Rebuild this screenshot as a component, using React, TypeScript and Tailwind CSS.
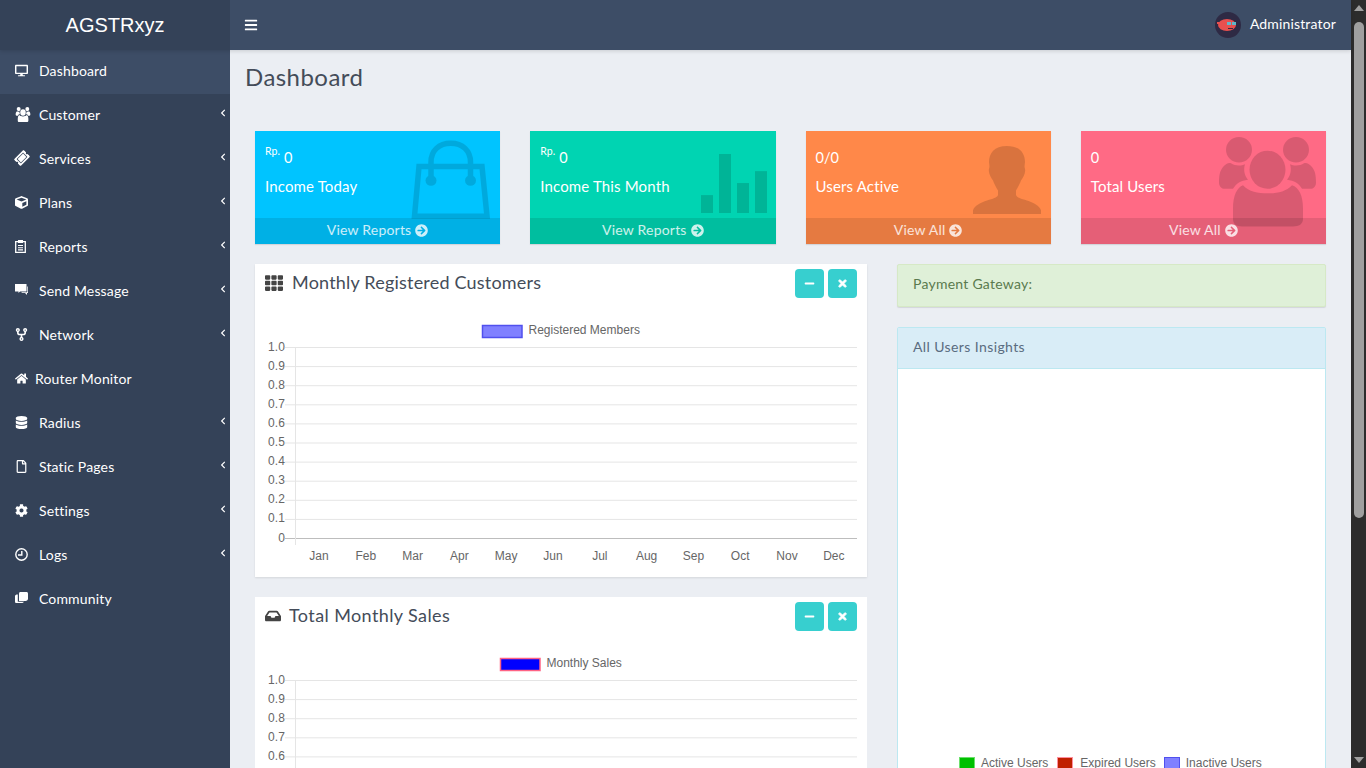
import React from 'react';
import {
  FaDesktop,
  FaTicketAlt,
  FaCube,
  FaHome,
  FaDatabase,
  FaRegFile,
  FaCog,
  FaChevronLeft,
  FaBars,
  FaArrowCircleRight,
  FaMinus,
  FaTimes,
  FaTh,
  FaInbox,
} from 'react-icons/fa';
import { FaCodeFork } from 'react-icons/fa6';

function PeoplePaths() {
  return (
    <>
      <ellipse cx="20" cy="14" rx="13" ry="14" />
      <ellipse cx="77" cy="14" rx="13" ry="14" />
      <path d="M4 33 C7 29 10 28 12 29 C16 32 22 32 26 30 C24 37 26 43 29 47 C22 48 17 51 14 57 H6 C2 57 0 54 0 50 C0 42 1 37 4 33 Z" />
      <path d="M93 33 C90 29 87 28 85 29 C81 32 75 32 71 30 C73 37 71 43 68 47 C75 48 80 51 83 57 H91 C95 57 97 54 97 50 C97 42 96 37 93 33 Z" />
      <ellipse cx="48.5" cy="36" rx="18" ry="21" />
      <path d="M24 53 C30 60 39 62 48.5 62 C58 62 67 60 73 53 C80 55 84 65 84 78 V90 C84 96 80 98.5 74 98.5 H23 C17 98.5 14 96 14 90 V78 C14 65 18 55 24 53 Z" />
    </>
  );
}

function UsersGlyph() {
  return (
    <svg width="16" height="15" viewBox="0 0 97 99" fill="white">
      <PeoplePaths />
    </svg>
  );
}

function TicketGlyph() {
  return <FaTicketAlt className="-rotate-45 text-[14px]" />;
}

function ClipboardGlyph() {
  return (
    <svg width="11" height="13" viewBox="0 0 11 13" fill="none" stroke="white" strokeWidth="1.3">
      <path d="M3 1.7H0.7V12.3H10.3V1.7H8" />
      <rect x="3" y="0" width="5" height="3" fill="white" stroke="none" />
      <path d="M3 5.5H8M3 7.7H8M3 9.9H8" strokeWidth="1.1" />
    </svg>
  );
}

function ChatGlyph() {
  return (
    <svg width="13" height="12" viewBox="0 0 13 12" fill="white">
      <path d="M0 0H11.5V7.5H5L3.5 9V7.5H0Z" />
      <path d="M12.3 2.5H13V9H12V11L10 9H6.2L7 8.3H12.3Z" />
    </svg>
  );
}

function CommunityGlyph() {
  return (
    <svg width="13" height="12" viewBox="0 0 13 12" fill="white">
      <path d="M4 1.5C4 0.6 4.6 0 5.5 0H11.5C12.4 0 13 0.6 13 1.5V6.5C13 8 12 9 10.5 9H4Z" />
      <path d="M2.8 2.5V9.8H9C8.5 10.8 7.5 11 6.5 11H1.5C0.5 11 0 10.5 0 9.5V4C0 3.2 1 2.5 2.8 2.5Z" />
    </svg>
  );
}

function ClockGlyph() {
  return (
    <svg width="13" height="13" viewBox="0 0 13 13" fill="none" stroke="white">
      <circle cx="6.5" cy="6.5" r="5.7" strokeWidth="1.4" />
      <path d="M6.8 3V7H3" strokeWidth="1.4" />
    </svg>
  );
}

const menu = [
  { label: 'Dashboard', icon: FaDesktop, active: true },
  { label: 'Customer', icon: UsersGlyph, arrow: true },
  { label: 'Services', icon: TicketGlyph, arrow: true },
  { label: 'Plans', icon: FaCube, arrow: true },
  { label: 'Reports', icon: ClipboardGlyph, arrow: true },
  { label: 'Send Message', icon: ChatGlyph, arrow: true },
  { label: 'Network', icon: FaCodeFork, arrow: true },
  { label: 'Router Monitor', icon: FaHome, tight: true },
  { label: 'Radius', icon: FaDatabase, arrow: true },
  { label: 'Static Pages', icon: FaRegFile, arrow: true },
  { label: 'Settings', icon: FaCog, arrow: true },
  { label: 'Logs', icon: ClockGlyph, arrow: true },
  { label: 'Community', icon: CommunityGlyph },
];

const months = ['Jan', 'Feb', 'Mar', 'Apr', 'May', 'Jun', 'Jul', 'Aug', 'Sep', 'Oct', 'Nov', 'Dec'];
const ticks = ['1.0', '0.9', '0.8', '0.7', '0.6', '0.5', '0.4', '0.3', '0.2', '0.1', '0'];

function BagIcon() {
  return (
    <svg width="80" height="81" viewBox="0 0 80 84" preserveAspectRatio="none" fill="none" stroke="black" strokeWidth="5.5" className="opacity-[0.13]">
      <path d="M3.5 80 L8 28.5 H71 L76 80 Z" />
      <path d="M20 43 V24 C20 12 28 4.4 39.75 4.4 C51.5 4.4 59.5 12 59.5 24 V43" />
      <circle cx="20" cy="43" r="5.5" fill="black" stroke="none" />
      <circle cx="59.5" cy="43" r="5.5" fill="black" stroke="none" />
    </svg>
  );
}

function BarsIcon() {
  return (
    <svg width="66" height="59" viewBox="0 0 66 61" preserveAspectRatio="none" className="fill-black/15">
      <rect x="0" y="42.5" width="12" height="18.5" />
      <rect x="18" y="0" width="12" height="61" />
      <rect x="36" y="30" width="12" height="31" />
      <rect x="54" y="17.7" width="12" height="43.3" />
    </svg>
  );
}

function PersonIcon() {
  return (
    <svg width="68" height="68" viewBox="0 0 68 75" preserveAspectRatio="none" className="fill-black/15">
      <path d="M34 0 C47 0 52 8 52 18 C52 20 51 22 52 25 C53 30 50 35 48 38 C46 44 44 47 43 49 V54 C44 57 48 58 54 60 C60 62 67 66 68 71 V75 H0 V71 C1 66 8 62 14 60 C20 58 24 57 25 54 V49 C24 47 22 44 20 38 C18 35 15 30 16 25 C17 22 16 20 16 18 C16 8 21 0 34 0 Z" />
    </svg>
  );
}

function PeopleIcon() {
  return (
    <svg width="97" height="90" viewBox="0 0 97 99" preserveAspectRatio="none" className="fill-black/15">
      <PeoplePaths />
    </svg>
  );
}

function Avatar() {
  return (
    <svg width="26" height="26" viewBox="0 0 26 26">
      <circle cx="13" cy="13" r="13" fill="#2e2a44" />
      <ellipse cx="12" cy="13" rx="9" ry="6" fill="#e8504f" />
      <rect x="12" y="10" width="4" height="3" fill="#5fb7c9" />
      <rect x="17" y="10" width="4" height="3" fill="#5fb7c9" />
      <rect x="2" y="10" width="4" height="2" fill="#e8504f" />
      <rect x="13" y="16" width="5" height="1" fill="#3a2b3c" />
    </svg>
  );
}

function StatCard({
  value,
  rp,
  label,
  link,
  color,
  art,
}: {
  value: string;
  rp?: boolean;
  label: string;
  link: string;
  color: string;
  art: React.ReactNode;
}) {
  return (
    <div className={`relative h-[113px] overflow-hidden shadow-[0_1px_1px_rgba(0,0,0,0.1)] ${color}`}>
      <div className="h-[87px] px-[10px] pt-[15px] text-white">
        <div className="flex h-[24px] items-center text-[14.5px]">
          {rp && <sup className="mr-[4px] -mt-[4px] text-[10.5px]">Rp.</sup>}
          {value}
        </div>
        <div className="mt-[4px] text-[15px] leading-[24px] tracking-[0.15px]">{label}</div>
      </div>
      {art}
      <div className="relative flex h-[26px] items-center justify-center gap-[4px] bg-black/10 pb-[3px] text-[14px] tracking-[0.2px] text-white/80">
        {link}
        <FaArrowCircleRight className="mt-[1px] text-[13px]" />
      </div>
    </div>
  );
}

function PanelTitle({ icon, title, gap }: { icon: React.ReactNode; title: string; gap: string }) {
  return (
    <div className="flex h-[39px] items-center justify-between pl-[10px] pr-[10px]">
      <div className={`flex items-center pb-[2px] text-[18px] text-[#444c59] ${gap}`}>
        {icon}
        {title}
      </div>
      <div className="flex gap-[4px]">
        <button className="flex h-[29px] w-[29px] items-center justify-center rounded-[4px] bg-[#37cfcf] text-[11px] text-white">
          <FaMinus />
        </button>
        <button className="flex h-[29px] w-[29px] items-center justify-center rounded-[4px] bg-[#37cfcf] text-[11px] text-white">
          <FaTimes className="stroke-white stroke-[40]" />
        </button>
      </div>
    </div>
  );
}

function LineChart({
  legend,
  swatch,
  stroke,
  legendX,
  height,
  clipped,
}: {
  legend: string;
  swatch: string;
  stroke: string;
  legendX: number;
  height: number;
  clipped?: boolean;
}) {
  const rows = clipped ? ticks.slice(0, 5) : ticks;
  return (
    <svg width="612" height={height} className="block [font-family:'Liberation_Sans',Arial,sans-serif]">
      <rect x={legendX} y="22.5" width="39.5" height="12" fill={swatch} stroke={stroke} strokeWidth="1.5" />
      <text x={legendX + 46} y="31" fontSize="12" fill="#666">
        {legend}
      </text>
      {rows.map((t, i) => {
        const y = 44.5 + i * 19.1;
        const last = i === 10;
        return (
          <g key={t}>
            <line x1="30" x2="602" y1={y} y2={y} stroke={last ? '#bdbdbd' : '#e5e5e5'} />
            <text x="30" y={y + 3} fontSize="12" fill="#666" textAnchor="end" letterSpacing="0.1">
              {t}
            </text>
          </g>
        );
      })}
      <line x1="40.5" x2="40.5" y1="44" y2={clipped ? height : 242} stroke="#e5e5e5" />
      {!clipped &&
        months.map((m, i) => (
          <text key={m} x={64 + i * 46.8} y="257" fontSize="12" fill="#666" textAnchor="middle">
            {m}
          </text>
        ))}
    </svg>
  );
}

export default function App() {
  return (
    <div className="flex h-screen w-full overflow-hidden bg-[#ebeef3] [font-family:Lato,sans-serif]">
      <div className="flex h-full w-[1351px] flex-col">
        <header className="z-10 flex h-[50px] shrink-0 shadow-[0_1px_4px_rgba(0,0,0,0.15)]">
          <div className="flex w-[230px] items-center justify-center bg-[#344258] text-[20px] text-white [font-family:'Liberation_Sans',Arial,sans-serif]">
            AGSTRxyz
          </div>
          <div className="flex flex-1 items-center justify-between bg-[#3d4d66] pl-[14px] pr-[15px] text-white">
            <FaBars className="text-[14px]" />
            <div className="flex items-center gap-[9px] text-[14px] tracking-[0.15px]">
              <Avatar />
              <span className="pb-[3px]">Administrator</span>
            </div>
          </div>
        </header>
        <div className="flex min-h-0 flex-1">
          <aside className="w-[230px] shrink-0 bg-[#344258] text-white">
            {menu.map((m) => {
              const Icon = m.icon;
              return (
                <div
                  key={m.label}
                  className={`flex h-[44px] items-center pb-[4px] pl-[15px] pr-[3px] text-[14px] tracking-[0.15px] ${m.active ? 'bg-[#3d4d66]' : ''}`}
                >
                  <span className={`flex items-center text-[13px] ${m.tight ? 'w-[20px]' : 'w-[24px]'}`}>
                    <Icon />
                  </span>
                  <span className="flex-1">{m.label}</span>
                  {m.arrow && <FaChevronLeft className="-mt-[2px] text-[8px]" />}
                </div>
              );
            })}
          </aside>
          <main className="min-w-0 flex-1 overflow-hidden">
            <h1 className="pl-[15px] pt-[13px] text-[24px] leading-[28px] tracking-[0.45px] text-[#444c59]">Dashboard</h1>
            <div className="mt-[40px] grid grid-cols-4 gap-[30px] px-[25px]">
              <StatCard
                rp
                value="0"
                label="Income Today"
                link="View Reports"
                color="bg-[#00c4ff]"
                art={
                  <div className="absolute right-[9px] top-[8px]">
                    <BagIcon />
                  </div>
                }
              />
              <StatCard
                rp
                value="0"
                label="Income This Month"
                link="View Reports"
                color="bg-[#00d4b2]"
                art={
                  <div className="absolute right-[9px] top-[23px]">
                    <BarsIcon />
                  </div>
                }
              />
              <StatCard
                value="0/0"
                label="Users Active"
                link="View All"
                color="bg-[#ff8849]"
                art={
                  <div className="absolute right-[10px] top-[15px]">
                    <PersonIcon />
                  </div>
                }
              />
              <StatCard
                value="0"
                label="Total Users"
                link="View All"
                color="bg-[#ff6a85]"
                art={
                  <div className="absolute right-[10px] top-[6px]">
                    <PeopleIcon />
                  </div>
                }
              />
            </div>
            <div className="mt-[20px] grid grid-cols-[612px_429px] gap-[30px] px-[25px]">
              <div className="flex flex-col gap-[20px]">
                <section className="h-[313px] bg-white shadow-[0_1px_2px_rgba(0,0,0,0.1)]">
                  <PanelTitle icon={<FaTh className="text-[18px] text-[#444]" />} title="Monthly Registered Customers" gap="gap-[9px] tracking-[0.2px]" />
                  <LineChart legend="Registered Members" swatch="#8080ff" stroke="#5050ee" legendX={227.5} height={270} />
                </section>
                <section className="bg-white">
                  <PanelTitle icon={<FaInbox className="text-[16px] text-[#444]" />} title="Total Monthly Sales" gap="gap-[8px] tracking-[0.4px]" />
                  <LineChart legend="Monthly Sales" swatch="#0000ff" stroke="#ff6384" legendX={245.5} height={132} clipped />
                </section>
              </div>
              <div className="flex flex-col gap-[20px]">
                <div className="flex h-[43px] items-center rounded-[2px] border border-[#d6e9c6] bg-[#dff0d8] px-[15px] pb-[5px] text-[14px] tracking-[0.25px] text-[#5a7a4e] shadow-[0_1px_1px_rgba(0,0,0,0.1)]">
                  Payment Gateway:
                </div>
                <section className="flex h-[450px] flex-col rounded-t-[2px] border border-[#bce8f1] bg-white">
                  <div className="flex h-[41px] shrink-0 items-center border-b border-[#bce8f1] bg-[#d9edf7] px-[15px] pb-[3px] text-[14px] tracking-[0.4px] text-[#5a6c80]">
                    All Users Insights
                  </div>
                  <div className="flex-1 pt-[385px] pl-[61px] text-[12px] text-[#666] [font-family:'Liberation_Sans',Arial,sans-serif]">
                    <div className="flex items-center">
                      <span className="h-[12px] w-[16px] border border-[#6be06b] bg-[#00c000]" />
                      <span className="ml-[6px]">Active Users</span>
                      <span className="ml-[9px] h-[12px] w-[16px] border border-[#ff8f9f] bg-[#c02000]" />
                      <span className="ml-[7px]">Expired Users</span>
                      <span className="ml-[8px] h-[12px] w-[16px] border border-[#5050ee] bg-[#8080ff]" />
                      <span className="ml-[6px]">Inactive Users</span>
                    </div>
                  </div>
                </section>
              </div>
            </div>
          </main>
        </div>
      </div>
      <div className="flex h-full w-[15px] shrink-0 flex-col items-center bg-[#2c2c2c]">
        <div className="mt-[5px] h-0 w-0 border-x-[5px] border-b-[6px] border-x-transparent border-b-[#9f9f9f]" />
        <div className="mt-[11px] h-[496px] w-[10px] rounded-[5px] bg-[#9f9f9f]" />
        <div className="mt-auto mb-[5px] h-0 w-0 border-x-[5px] border-t-[6px] border-x-transparent border-t-[#9f9f9f]" />
      </div>
    </div>
  );
}
